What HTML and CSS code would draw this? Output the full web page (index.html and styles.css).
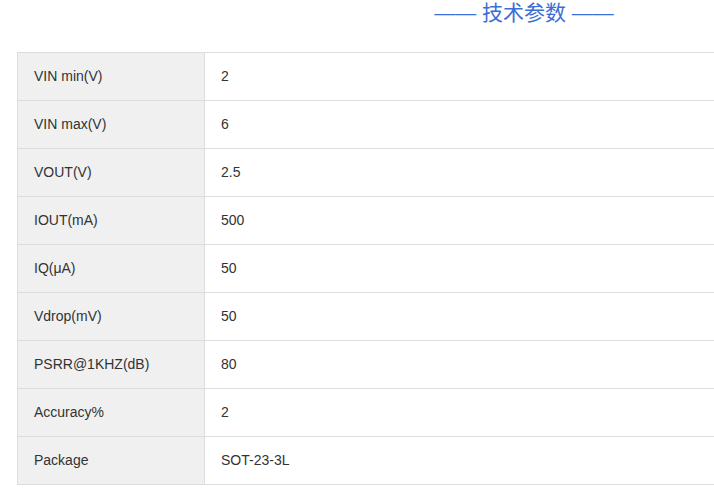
FILE: index.html
```html
<!DOCTYPE html>
<html lang="zh">
<head>
<meta charset="utf-8">
<link rel="stylesheet" href="styles.css">
</head>
<body>
<div class="viewport">
<div class="wrap">
  <h2 class="title">—— 技术参数 ——</h2>
  <table class="params">
    <tr><th>VIN min(V)</th><td>2</td></tr>
    <tr><th>VIN max(V)</th><td>6</td></tr>
    <tr><th>VOUT(V)</th><td>2.5</td></tr>
    <tr><th>IOUT(mA)</th><td>500</td></tr>
    <tr><th>IQ(μA)</th><td>50</td></tr>
    <tr><th>Vdrop(mV)</th><td>50</td></tr>
    <tr><th>PSRR@1KHZ(dB)</th><td>80</td></tr>
    <tr><th>Accuracy%</th><td>2</td></tr>
    <tr><th>Package</th><td>SOT-23-3L</td></tr>
  </table>
</div>
</div>
</body>
</html>
```

FILE: styles.css
```css
html, body {
  margin: 0;
  padding: 0;
  overflow: hidden;
  background: #fff;
}
body {
  font-family: "Liberation Sans", Arial, "Noto Sans CJK SC", sans-serif;
  color: #333;
}
.viewport {
  width: 714px;
  overflow: hidden;
}
.wrap {
  width: 1014px;
  margin-left: 17px;
}
.title {
  margin: 0;
  height: 52px;
  padding-top: 0;
  box-sizing: border-box;
  text-align: center;
  font-weight: normal;
  font-size: 21px;
  line-height: 26px;
  color: #3b6fd6;
  font-family: "Liberation Sans", "Noto Sans CJK SC", sans-serif;
}
.params {
  width: 100%;
  border-collapse: collapse;
  font-size: 14px;
}
.params th, .params td {
  border: 1px solid #ddd;
  height: 48px;
  padding: 0 16px 2px;
  text-align: left;
  font-weight: normal;
  box-sizing: border-box;
}
.params th {
  width: 187px;
  background: #f0f0f0;
}
.params td {
  background: #fff;
}
```
